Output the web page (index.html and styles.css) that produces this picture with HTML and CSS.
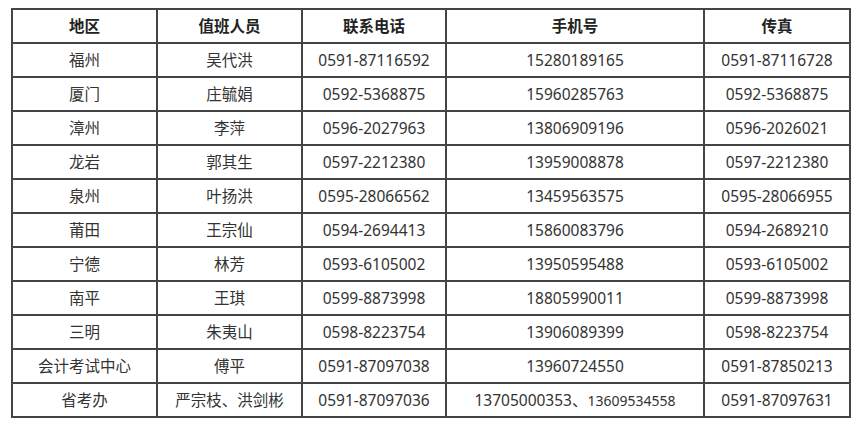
FILE: index.html
```html
<!DOCTYPE html>
<html lang="zh">
<head>
<meta charset="utf-8">
<link rel="stylesheet" href="styles.css">
</head>
<body>
<table class="duty">
<colgroup>
<col class="c1"><col class="c2"><col class="c3"><col class="c4"><col class="c5">
</colgroup>
<thead>
<tr><th>地区</th><th>值班人员</th><th>联系电话</th><th>手机号</th><th>传真</th></tr>
</thead>
<tbody>
<tr><td>福州</td><td>吴代洪</td><td>0591-87116592</td><td>15280189165</td><td>0591-87116728</td></tr>
<tr><td>厦门</td><td>庄毓娟</td><td>0592-5368875</td><td>15960285763</td><td>0592-5368875</td></tr>
<tr><td>漳州</td><td>李萍</td><td>0596-2027963</td><td>13806909196</td><td>0596-2026021</td></tr>
<tr><td>龙岩</td><td>郭其生</td><td>0597-2212380</td><td>13959008878</td><td>0597-2212380</td></tr>
<tr><td>泉州</td><td>叶扬洪</td><td>0595-28066562</td><td>13459563575</td><td>0595-28066955</td></tr>
<tr><td>莆田</td><td>王宗仙</td><td>0594-2694413</td><td>15860083796</td><td>0594-2689210</td></tr>
<tr><td>宁德</td><td>林芳</td><td>0593-6105002</td><td>13950595488</td><td>0593-6105002</td></tr>
<tr><td>南平</td><td>王琪</td><td>0599-8873998</td><td>18805990011</td><td>0599-8873998</td></tr>
<tr><td>三明</td><td>朱夷山</td><td>0598-8223754</td><td>13906089399</td><td>0598-8223754</td></tr>
<tr><td>会计考试中心</td><td>傅平</td><td>0591-87097038</td><td>13960724550</td><td>0591-87850213</td></tr>
<tr><td>省考办</td><td>严宗枝、洪剑彬</td><td>0591-87097036</td><td>13705000353、<span class="small">13609534558</span></td><td>0591-87097631</td></tr>
</tbody>
</table>
</body>
</html>
```
FILE: styles.css
```css
html, body {
  margin: 0;
  background: #fff;
}
body {
  padding: 8px 0 0 11px;
  font-family: "Noto Sans", "Noto Sans CJK SC", sans-serif;
  font-size: 15.5px;
  color: #333;
}
.duty {
  border-collapse: collapse;
  width: 838px;
  table-layout: fixed;
}
.c1 { width: 145px; }
.c2 { width: 145px; }
.c3 { width: 144px; }
.c4 { width: 258px; }
.c5 { width: 146px; }
.duty th, .duty td {
  border: 2px solid #444;
  height: 32px;
  padding: 0;
  text-align: center;
  vertical-align: middle;
  line-height: 20px;
  white-space: nowrap;
}
.duty th {
  font-weight: bold;
  color: #222;
}
.small {
  font-size: 14px;
}
```
